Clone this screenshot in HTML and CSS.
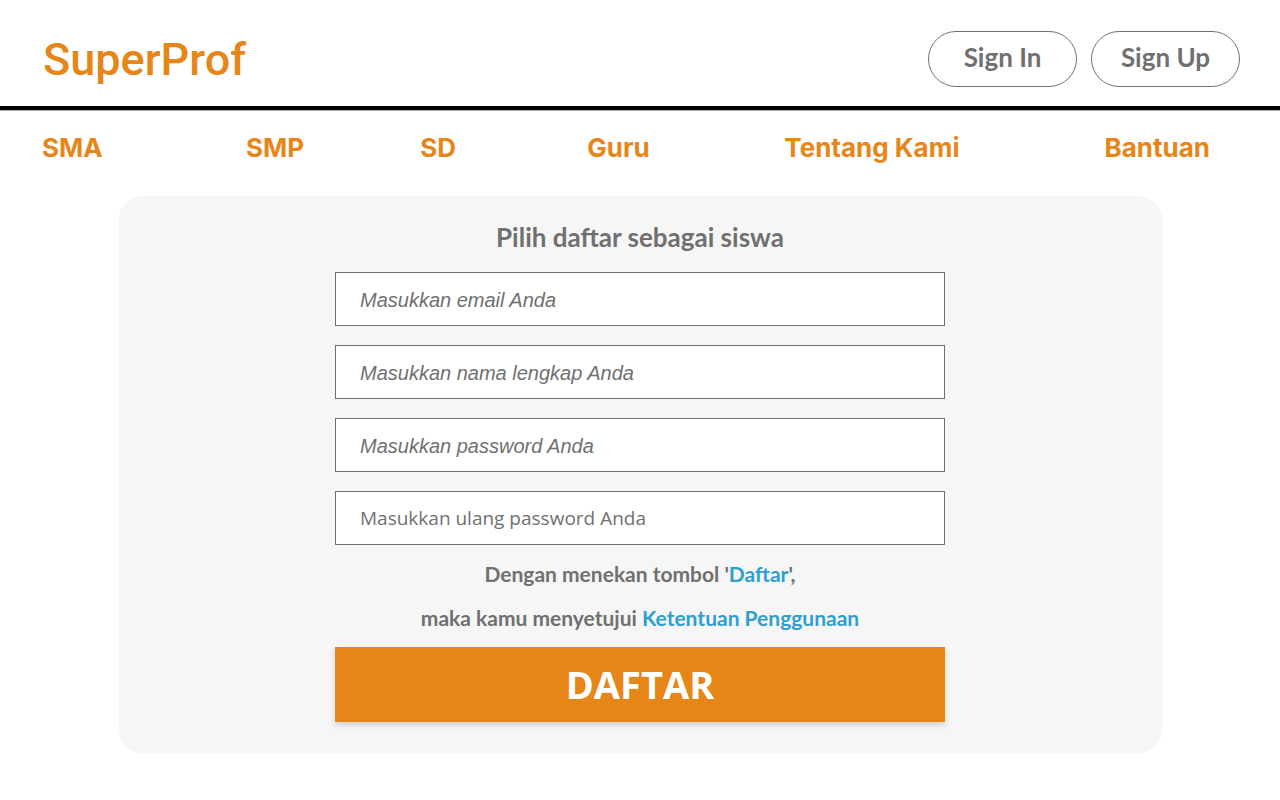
FILE: index.html
```html
<!DOCTYPE html>
<html lang="id">
<head>
  <meta charset="utf-8">
  <meta name="viewport" content="width=device-width, initial-scale=1">
  <title>SuperProf</title>
  <link rel="stylesheet" href="styles.css">
</head>
<body>
  <header class="header">
    <a class="brand" href="#">SuperProf</a>
    <div class="account">
      <button class="pill" type="button">Sign In</button>
      <button class="pill" type="button">Sign Up</button>
    </div>
  </header>
  <nav class="nav">
    <a href="#">SMA</a>
    <a href="#">SMP</a>
    <a href="#">SD</a>
    <a href="#">Guru</a>
    <a href="#">Tentang Kami</a>
    <a href="#">Bantuan</a>
  </nav>
  <main class="card">
    <form class="form">
      <h1 class="title">Pilih daftar sebagai siswa</h1>
      <input class="field" type="email" placeholder="Masukkan email Anda" aria-label="Masukkan email Anda">
      <input class="field" type="text" placeholder="Masukkan nama lengkap Anda" aria-label="Masukkan nama lengkap Anda">
      <input class="field" type="password" placeholder="Masukkan password Anda" aria-label="Masukkan password Anda">
      <input class="field field-repeat" type="password" placeholder="Masukkan ulang password Anda" aria-label="Masukkan ulang password Anda">
      <p class="terms">Dengan menekan tombol '<a href="#">Daftar</a>',<br>maka kamu menyetujui <a href="#">Ketentuan Penggunaan</a></p>
      <button class="submit" type="submit">DAFTAR</button>
    </form>
  </main>
</body>
</html>
```
FILE: styles.css
```css
* {
  box-sizing: border-box;
}

body {
  margin: 0;
  background: #fff;
  color: #707070;
  font-family: "Open Sans", "Noto Sans", sans-serif;
}

a {
  text-decoration: none;
}

.header {
  display: flex;
  align-items: center;
  justify-content: space-between;
  padding: 31px 40px 19px 43px;
  border-bottom: 4px solid #000;
  box-shadow: 0 1px 0 #b0b0b0;
}

.brand {
  padding-top: 2px;
  color: #e68619;
  font: 500 45px/54px Roboto, sans-serif;
}

.account {
  display: flex;
  gap: 14px;
}

.pill {
  width: 149px;
  height: 56px;
  padding: 0 0 4px;
  border: 1px solid #707070;
  border-radius: 28px;
  background: #fff;
  color: #707070;
  font: 700 26px/36px Lato, sans-serif;
}

.nav {
  display: grid;
  grid-template-columns: 204fr 174fr 167fr 197fr 320fr auto;
  padding: 18px 70px 28px 42px;
}

.nav a {
  color: #e68619;
  font: 700 26px/40px Inter, sans-serif;
}

.card {
  max-width: 1043px;
  margin: 0 auto;
  padding: 21px 24px 31px;
  border-radius: 24px;
  background: #f6f6f6;
  box-shadow: 0 0 2px #f6f6f6;
}

.form {
  display: flex;
  flex-direction: column;
  max-width: 610px;
  margin: 0 auto;
}

.title {
  margin: 0 0 15px;
  font: 700 26px/40px Lato, sans-serif;
  text-align: center;
}

.field {
  width: 100%;
  height: 54px;
  margin: 0 0 19px;
  padding: 2px 24px 0;
  border: 1px solid #707070;
  border-radius: 0;
  background: #fff;
  color: #707070;
  font: italic 20px/24px "Liberation Sans", sans-serif;
}

.field::placeholder {
  color: #707070;
  opacity: 1;
}

.field-repeat {
  margin-bottom: 7px;
  padding-top: 0;
  font: 19px/24px "Open Sans", sans-serif;
}

.terms {
  margin: 0 0 7px;
  font: 700 21px/44px Lato, sans-serif;
  text-align: center;
}

.terms a {
  color: #2e9fd1;
}

.submit {
  height: 75px;
  padding: 0 0 2px;
  border: 0;
  background: #e68619;
  box-shadow: 0 3px 6px rgba(0, 0, 0, 0.16);
  color: #fff;
  font: 700 38px/56px "Open Sans", sans-serif;
}
```
